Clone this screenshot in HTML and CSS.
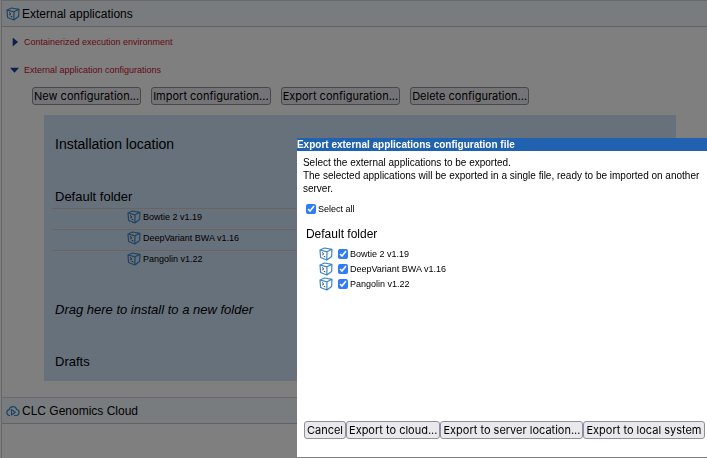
FILE: index.html
```
<!DOCTYPE html>
<html lang="en">
<head>
    <meta charset="UTF-8">
    <meta name="viewport" content="width=device-width, initial-scale=1.0">
    <title>External applications</title>
    <link rel="stylesheet" href="styles.css">
</head>
<body>
    <svg class="symbols" aria-hidden="true">
        <symbol id="cube" viewBox="0 0 14 14">
            <path d="M1 3 L5.5 1 L13 2.3 L12.6 9.5 L7.8 13 L1.6 10.5 Z M1 3 L8 4.8 L13 2.3 M8 4.8 L7.8 13" fill="none" stroke="#3d86c6" stroke-width="1.2" stroke-linejoin="round"/>
            <path d="M3 5.4 L4.8 7 L3.2 8 M4.8 9.4 L6.3 9.8" fill="none" stroke="#333" stroke-width="0.9"/>
        </symbol>
        <symbol id="cloud" viewBox="0 0 14 12">
            <path d="M4 10.5 H3.5 A3 3 0 0 1 3.2 4.6 A3.8 3.8 0 0 1 10.6 4.4 A3.1 3.1 0 0 1 10.5 10.5 H8 M5.5 10.5 V4.5 L9.3 7.2 L5.5 10" fill="none" stroke="#3d86c6" stroke-width="1.2" stroke-linejoin="round"/>
        </symbol>
    </svg>

    <main class="page">
        <h2 class="section-header">
            <svg class="icon"><use href="#cube"/></svg>
            External applications
        </h2>

        <div class="section-body">
            <a class="toggle" href="#environment"><span class="arrow"></span>Containerized execution environment</a>
            <a class="toggle" href="#configurations"><span class="arrow open"></span>External application configurations</a>

            <div class="toolbar" id="configurations">
                <button>New configuration...</button>
                <button>Import configuration...</button>
                <button>Export configuration...</button>
                <button>Delete configuration...</button>
            </div>

            <div class="locations">
                <h3>Installation location</h3>
                <h4>Default folder</h4>
                <ul class="app-list">
                    <li><svg class="icon"><use href="#cube"/></svg>Bowtie 2 v1.19</li>
                    <li><svg class="icon"><use href="#cube"/></svg>DeepVariant BWA v1.16</li>
                    <li><svg class="icon"><use href="#cube"/></svg>Pangolin v1.22</li>
                </ul>
                <h4 class="drop-hint">Drag here to install to a new folder</h4>
                <h4>Drafts</h4>
            </div>
        </div>

        <h2 class="section-header">
            <svg class="icon"><use href="#cloud"/></svg>
            CLC Genomics Cloud
        </h2>
    </main>

    <div class="overlay">
        <div class="dialog" role="dialog" aria-labelledby="dialog-title">
            <h1 id="dialog-title">Export external applications configuration file</h1>
            <form class="dialog-body">
                <p>Select the external applications to be exported.<br>
                The selected applications will be exported in a single file, ready to be imported on another server.</p>
                <label class="check"><input type="checkbox" checked>Select all</label>
                <h4>Default folder</h4>
                <ul class="export-list">
                    <li><svg class="icon"><use href="#cube"/></svg><label class="check"><input type="checkbox" checked>Bowtie 2 v1.19</label></li>
                    <li><svg class="icon"><use href="#cube"/></svg><label class="check"><input type="checkbox" checked>DeepVariant BWA v1.16</label></li>
                    <li><svg class="icon"><use href="#cube"/></svg><label class="check"><input type="checkbox" checked>Pangolin v1.22</label></li>
                </ul>
                <div class="dialog-buttons">
                    <button type="button">Cancel</button>
                    <button type="button">Export to cloud...</button>
                    <button type="button">Export to server location...</button>
                    <button type="button">Export to local system</button>
                </div>
            </form>
        </div>
    </div>
</body>
</html>
```

FILE: styles.css
```
* {
    box-sizing: border-box;
}
body {
    margin: 0;
    font-family: "Liberation Sans", Arial, sans-serif;
    font-size: 9px;
    line-height: 12px;
    color: #000;
    background: #fff;
}
h1, h2, h3, h4, p, ul {
    margin: 0;
    padding: 0;
    font-weight: normal;
}
ul {
    list-style: none;
}
button {
    height: 18px;
    padding: 0 2px;
    font-family: Inter, sans-serif;
    font-size: 11px;
    line-height: 14px;
    color: #000;
    white-space: nowrap;
    background: #e9e9ed;
    border: 1px solid #8f8f9d;
    border-radius: 3px;
}
.symbols {
    display: none;
}
.icon {
    flex: none;
    width: 14px;
    height: 14px;
}
.page {
    margin-left: 1px;
    min-height: 100vh;
    border-left: 1px solid #d0ccd0;
}
.section-header {
    display: flex;
    align-items: center;
    gap: 2px;
    height: 27px;
    padding-left: 4px;
    font-size: 12px;
    background: #f3f9ff;
    border-top: 1px solid #d4d0d4;
    border-bottom: 1px solid #c8c4c8;
}
.section-body {
    padding: 9px 31px 16px 8px;
}
.toggle {
    display: flex;
    align-items: center;
    gap: 5px;
    height: 12px;
    margin-bottom: 16px;
    color: #c8102e;
    text-decoration: none;
}
.arrow {
    width: 9px;
    height: 9px;
    background: #1c3f94;
    clip-path: polygon(30% 0, 90% 50%, 30% 100%);
}
.arrow.open {
    clip-path: polygon(0 25%, 100% 25%, 50% 80%);
}
.toolbar {
    display: flex;
    gap: 10px;
    margin: -5px 0 10px 22px;
}
.toolbar button {
    padding: 0 1px;
}
.locations {
    margin-left: 34px;
    padding: 21px 0 12px;
    background: #cee2f6;
}
.locations h3 {
    padding-left: 11px;
    font-size: 14px;
    line-height: 16px;
}
h4 {
    font-size: 12px;
    line-height: 14px;
}
.locations h4 {
    margin-top: 38px;
    padding-left: 11px;
    font-size: 13px;
}
.app-list {
    margin: 4px 0 0 8px;
}
.app-list li {
    display: flex;
    align-items: center;
    gap: 2px;
    height: 21px;
    padding: 0 0 4px 75px;
    border-top: 1px solid #d9c4bd;
}
.locations .drop-hint {
    margin-top: 32px;
    font-style: italic;
}
.overlay {
    position: fixed;
    inset: 0;
    background: rgba(0, 0, 0, 0.5);
}
.dialog {
    position: absolute;
    top: 138px;
    right: 0;
    bottom: 1px;
    left: 42%;
    display: flex;
    flex-direction: column;
    background: #fff;
}
.dialog h1 {
    font-size: 10px;
    font-weight: bold;
    line-height: 13px;
    color: #fff;
    background: #2062af;
}
.dialog-body {
    display: flex;
    flex: 1;
    flex-direction: column;
    padding: 5px 4px 18px 6px;
}
.dialog-body p {
    font-size: 10px;
    line-height: 13px;
}
.check {
    display: flex;
    align-items: center;
    gap: 2px;
}
.check input {
    width: 10px;
    height: 10px;
    margin: 0;
    accent-color: #2f7cf6;
}
.dialog-body > .check {
    margin: 8px 0 0 3px;
}
.dialog-body h4 {
    margin: 12px 0 5px 3px;
}
.export-list {
    padding-left: 16px;
}
.export-list li {
    display: flex;
    align-items: center;
    gap: 5px;
    height: 15px;
}
.dialog-buttons {
    display: flex;
    padding-left: 1px;
    margin-top: auto;
}
```
